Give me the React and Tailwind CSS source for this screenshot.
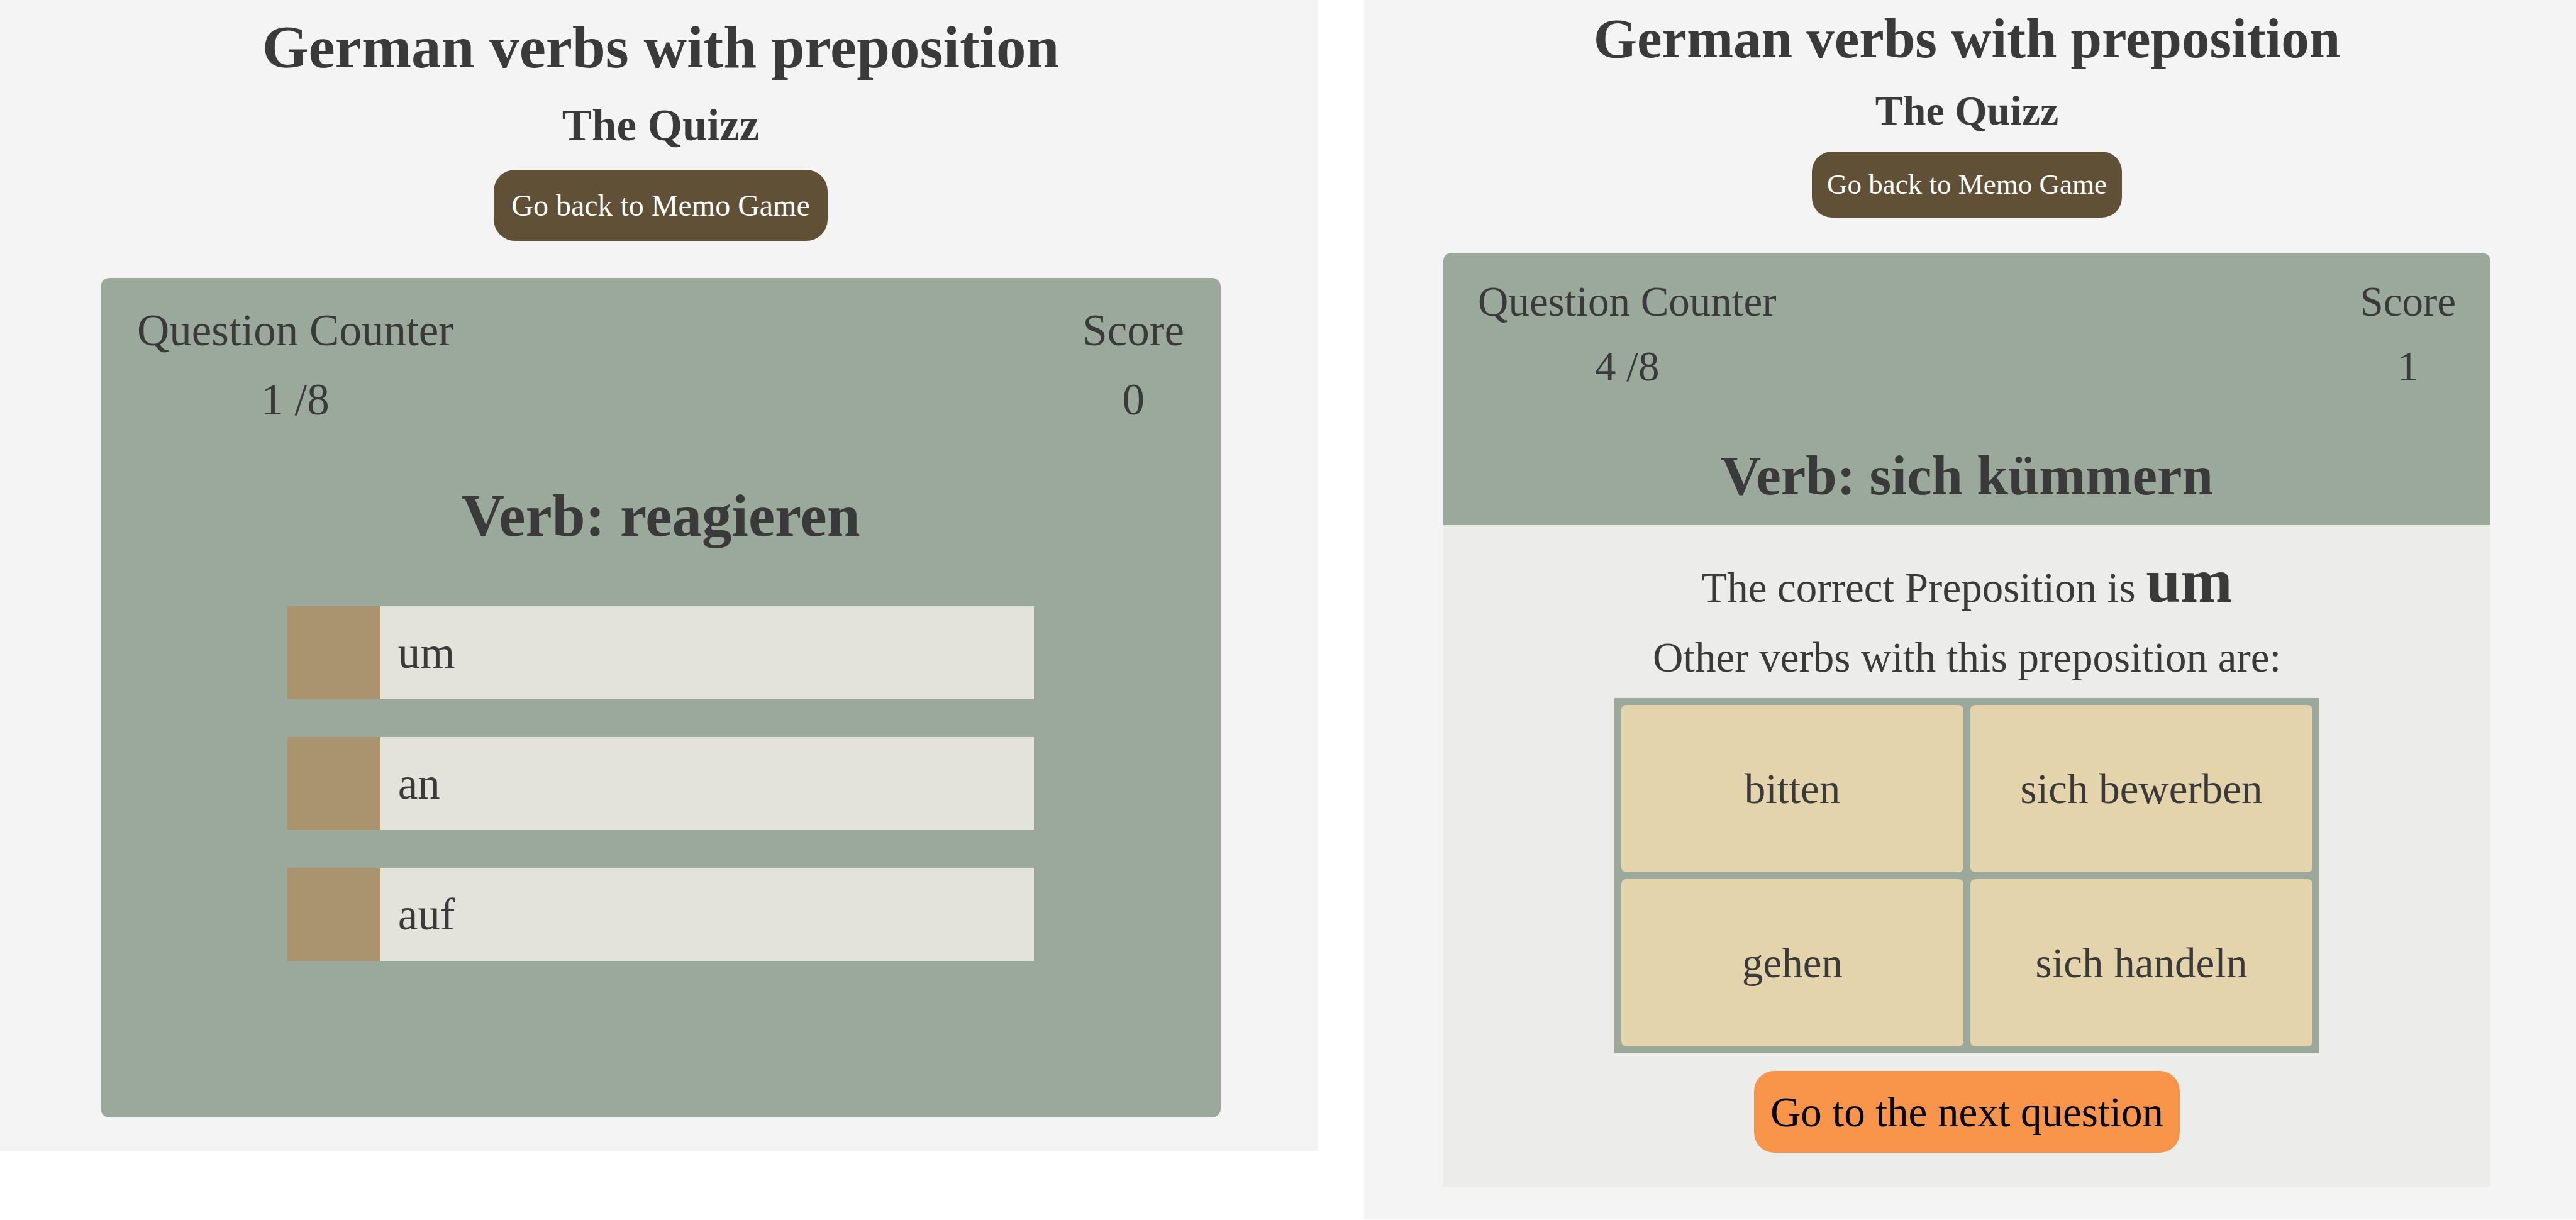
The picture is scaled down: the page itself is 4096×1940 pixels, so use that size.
const OPTIONS = ["um", "an", "auf"];
const RELATED_VERBS = ["bitten", "sich bewerben", "gehen", "sich handeln"];

function Stat({ label, value, className }) {
  return (
    <div className={`text-center ${className}`}>
      <p>{label}</p>
      <p>{value}</p>
    </div>
  );
}

function QuestionScreen() {
  return (
    <main className="flex flex-col items-center bg-[#f4f4f4] pt-5 pr-[155px] pb-[54px] pl-[160px]">
      <h1 className="text-[95px] leading-[110px] font-bold">German verbs with preposition</h1>
      <h2 className="mt-7 text-[71px] leading-[82px] font-bold">The Quizz</h2>
      <button
        type="button"
        className="mt-[30px] h-[113px] rounded-[34px] bg-[#605036] px-7 text-[48px] text-white"
      >
        Go back to Memo Game
      </button>
      <section className="mt-[59px] w-full rounded-[14px] bg-[#9ba99c] pt-7 pb-[249px]">
        <div className="flex justify-between px-[58px]">
          <Stat label="Question Counter" value="1 /8" className="text-[71px] leading-[110px]" />
          <Stat label="Score" value="0" className="text-[71px] leading-[110px]" />
        </div>
        <h2 className="mt-[75px] text-center text-[95px] leading-[110px] font-bold">Verb: reagieren</h2>
        <div className="mx-auto mt-[89px] flex w-2/3 flex-col gap-[60px]">
          {OPTIONS.map((option) => (
            <button
              key={option}
              type="button"
              className="flex h-[148px] w-full items-center bg-[#e3e3db] text-[71px]"
            >
              <span className="h-full w-[148px] bg-[#aa946e]" />
              <span className="px-7">{option}</span>
            </button>
          ))}
        </div>
      </section>
    </main>
  );
}

function AnswerScreen() {
  return (
    <main className="flex flex-col items-center bg-[#f4f4f4] pt-[10px] pr-[136px] pb-[51px] pl-[126px]">
      <h1 className="text-[89px] leading-[102px] font-bold">German verbs with preposition</h1>
      <h2 className="mt-[26px] text-[66px] leading-[76px] font-bold">The Quizz</h2>
      <button
        type="button"
        className="mt-[27px] h-[105px] rounded-[32px] bg-[#605036] px-6 text-[45px] text-white"
      >
        Go back to Memo Game
      </button>
      <section className="mt-14 w-full">
        <div className="rounded-t-[13px] bg-[#9ba99c] pt-[26px] pb-7">
          <div className="flex justify-between px-[55px]">
            <Stat label="Question Counter" value="4 /8" className="text-[67px] leading-[103px]" />
            <Stat label="Score" value="1" className="text-[67px] leading-[103px]" />
          </div>
          <h2 className="mt-[71px] text-center text-[89px] leading-[102px] font-bold">Verb: sich kümmern</h2>
        </div>
        <div className="flex flex-col items-center bg-[#ececea] pt-[37px] pb-[55px] text-[67px]">
          <p className="leading-[124px]">
            The correct Preposition is <strong className="text-[99px] leading-none">um</strong>
          </p>
          <p className="leading-[98px]">Other verbs with this preposition are:</p>
          <ul className="mt-4 grid w-[1121px] max-w-full grid-cols-2 gap-[11px] bg-[#9ba99c] p-[11px]">
            {RELATED_VERBS.map((verb) => (
              <li
                key={verb}
                className="flex h-[266px] items-center justify-center rounded-[8px] bg-[#e3d4ac]"
              >
                {verb}
              </li>
            ))}
          </ul>
          <button type="button" className="mt-7 h-[130px] rounded-[32px] bg-[#f9954b] px-[26px] text-black">
            Go to the next question
          </button>
        </div>
      </section>
    </main>
  );
}

export default function App() {
  return (
    <div className="grid min-h-screen grid-cols-[minmax(0,2096fr)_minmax(0,1927fr)] items-start gap-x-[73px] bg-white font-['Liberation_Serif','Times_New_Roman',serif] text-[#3a3a3a]">
      <QuestionScreen />
      <AnswerScreen />
    </div>
  );
}
